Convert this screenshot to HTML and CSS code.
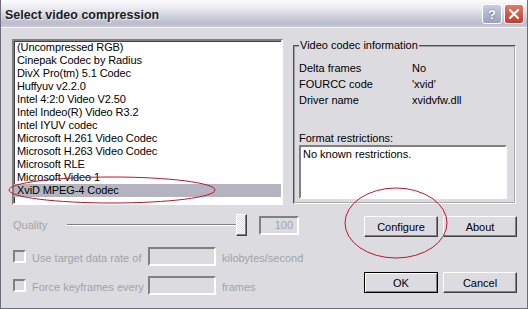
FILE: index.html
```html
<!DOCTYPE html>
<html lang="en">
<head>
    <meta charset="UTF-8">
    <title>Select video compression</title>
    <link rel="stylesheet" href="styles.css">
</head>
<body>
    <div class="window">
        <div class="titlebar">
            <span class="title">Select video compression</span>
            <div class="caption-buttons">
                <span class="cap-btn cap-help">?</span>
                <span class="cap-btn cap-close">
                    <svg width="12" height="12" viewBox="0 0 12 12"><path d="M2 2 L10 10 M10 2 L2 10" stroke="#fff" stroke-width="2.2" stroke-linecap="round"/></svg>
                </span>
            </div>
        </div>

        <div class="client">
            <div class="top">
                <ul class="codec-list">
                    <li>(Uncompressed RGB)</li>
                    <li>Cinepak Codec by Radius</li>
                    <li>DivX Pro(tm) 5.1 Codec</li>
                    <li>Huffyuv v2.2.0</li>
                    <li>Intel 4:2:0 Video V2.50</li>
                    <li>Intel Indeo(R) Video R3.2</li>
                    <li>Intel IYUV codec</li>
                    <li>Microsoft H.261 Video Codec</li>
                    <li>Microsoft H.263 Video Codec</li>
                    <li>Microsoft RLE</li>
                    <li>Microsoft Video 1</li>
                    <li class="selected">XviD MPEG-4 Codec</li>
                </ul>

                <fieldset class="info">
                    <legend>Video codec information</legend>
                    <div class="info-rows">
                        <span>Delta frames</span><span>No</span>
                        <span>FOURCC code</span><span>'xvid'</span>
                        <span>Driver name</span><span>xvidvfw.dll</span>
                    </div>
                    <div class="restrict-label">Format restrictions:</div>
                    <div class="restrict-box">No known restrictions.</div>
                </fieldset>
            </div>

            <div class="bottom">
                <div class="options">
                    <div class="quality-row">
                        <span class="quality-label">Quality</span>
                        <div class="slider">
                            <div class="slider-track"></div>
                            <div class="slider-thumb"></div>
                        </div>
                        <div class="edit edit-small">100</div>
                    </div>
                    <div class="check-row">
                        <span class="checkbox"></span>
                        <span class="check-label">Use target data rate of</span>
                        <div class="edit"></div>
                        <span class="unit">kilobytes/second</span>
                    </div>
                    <div class="check-row">
                        <span class="checkbox"></span>
                        <span class="check-label">Force keyframes every</span>
                        <div class="edit"></div>
                        <span class="unit">frames</span>
                    </div>
                </div>

                <div class="actions">
                    <div class="btn-row">
                        <button class="btn">Configure</button>
                        <button class="btn">About</button>
                    </div>
                    <div class="btn-row btn-row-last">
                        <button class="btn btn-default">OK</button>
                        <button class="btn">Cancel</button>
                    </div>
                </div>
            </div>
        </div>

        <!-- red marker circles drawn over the dialog -->
        <svg class="marks" width="528" height="309" viewBox="0 0 528 309">
            <ellipse cx="112" cy="190" rx="103" ry="13" fill="none" stroke="#c4142c" stroke-width="1"/>
            <ellipse cx="396" cy="223" rx="51" ry="35" fill="none" stroke="#c4142c" stroke-width="1"/>
        </svg>
    </div>
</body>
</html>
```

FILE: styles.css
```css
body {
    margin: 0;
    padding: 0;
    background: #fff;
    font-family: 'Liberation Sans', Arial, sans-serif;
    font-size: 11px;
    color: #000;
}

.window {
    position: relative;
    width: 528px;
    height: 309px;
    box-sizing: border-box;
    background: #dcdbe0;
    border: 1px solid #6c6c7a;
    border-top: none;
    overflow: hidden;
}

.titlebar {
    height: 28px;
    display: flex;
    align-items: center;
    justify-content: space-between;
    padding: 0 3px 0 4px;
    box-sizing: border-box;
    background: linear-gradient(#fbfbfd 0%, #eeeef3 25%, #d6d6e0 55%, #bcbdcb 85%, #c9c9d4 100%);
    border-bottom: 1px solid #f4f4f8;
}

.title {
    font-weight: bold;
    font-size: 12.5px;
    color: #1c1c24;
    text-shadow: 1px 1px 0 rgba(255, 255, 255, 0.7);
    padding-top: 2px;
}

.caption-buttons {
    display: flex;
    gap: 2px;
    padding-top: 1px;
}

.cap-btn {
    width: 20px;
    height: 20px;
    box-sizing: border-box;
    border: 1px solid #fff;
    border-radius: 3px;
    display: flex;
    align-items: center;
    justify-content: center;
}

.cap-help {
    background: linear-gradient(#c9cde0, #9ba1bd);
    color: #fff;
    font-weight: bold;
    font-size: 13px;
    text-shadow: 0 0 2px #4a5070;
}

.cap-close {
    background: linear-gradient(#e27a66, #c33c2c);
}

.client {
    padding: 11px 10px 0 11px;
}

.top {
    display: flex;
    align-items: flex-start;
    gap: 10px;
}

.codec-list {
    list-style: none;
    margin: 0;
    padding: 0;
    width: 271px;
    height: 166px;
    box-sizing: border-box;
    background: #fff;
    border: 2px solid;
    border-color: #808080 #fff #fff #808080;
    box-shadow: inset 1px 1px 0 #404040;
    letter-spacing: -0.1px;
}

.codec-list li {
    height: 13px;
    line-height: 13px;
    padding-left: 3px;
    white-space: nowrap;
}

.codec-list .selected {
    background: #b3b4bf;
}

.info {
    margin: 0;
    width: 223px;
    height: 165px;
    box-sizing: border-box;
    padding: 0 4px 0 4px;
    border: 2px groove #fff;
    border-color: #a0a0a8 #fff #fff #a0a0a8;
    min-inline-size: 0;
}

.info legend {
    padding: 0 1px;
    line-height: 13px;
}

.info-rows {
    display: grid;
    grid-template-columns: 113px 1fr;
    line-height: 16px;
    margin-top: 8px;
}

.restrict-label {
    margin-top: 24px;
    line-height: 13px;
}

.restrict-box {
    width: 208px;
    height: 54px;
    box-sizing: border-box;
    background: #fff;
    border: 2px solid;
    border-color: #808080 #fff #fff #808080;
    padding: 1px 2px;
    line-height: 13px;
}

.bottom {
    display: grid;
    grid-template-columns: 1fr 153px;
}

.options {
    display: flex;
    flex-direction: column;
    padding-left: 1px;
    color: #a3a3a6;
}

.quality-row {
    display: flex;
    align-items: center;
    height: 22px;
    margin-top: 9px;
}

.quality-label {
    width: 54px;
}

.slider {
    position: relative;
    width: 180px;
    height: 22px;
    display: flex;
    align-items: center;
    margin-right: 12px;
}

.slider-track {
    width: 100%;
    height: 2px;
    border-top: 1px solid #808080;
    border-bottom: 1px solid #fff;
    box-sizing: border-box;
}

.slider-thumb {
    position: absolute;
    right: 0;
    top: 0;
    width: 11px;
    height: 22px;
    box-sizing: border-box;
    border: 1px solid;
    border-color: #fff #404040 #404040 #fff;
    box-shadow: inset -1px -1px 0 #808080;
    background: repeating-conic-gradient(#fff 0 25%, #dcdbe0 0 50%) 0 0 / 2px 2px;
}

.edit {
    width: 68px;
    height: 19px;
    box-sizing: border-box;
    border: 2px solid;
    border-color: #808080 #fff #fff #808080;
    text-align: right;
    line-height: 15px;
    padding-right: 4px;
}

.edit-small {
    width: 40px;
}

.check-row {
    display: flex;
    align-items: center;
    height: 19px;
    margin-top: 11px;
}

.check-row + .check-row {
    margin-top: 10px;
}

.checkbox {
    width: 13px;
    height: 13px;
    box-sizing: border-box;
    border: 2px solid;
    border-color: #808080 #fff #fff #808080;
    margin-right: 6px;
}

.check-label {
    width: 116px;
    padding-top: 3px;
}

.unit {
    margin-left: 6px;
    padding-top: 3px;
}

.actions {
    padding-top: 11px;
}

.btn-row {
    display: flex;
    gap: 5px;
}

.btn-row-last {
    margin-top: 35px;
}

.btn {
    width: 74px;
    height: 21px;
    box-sizing: border-box;
    margin: 0;
    padding: 0;
    font-family: inherit;
    font-size: 11px;
    color: #000;
    background: #dcdbe0;
    border: 1px solid;
    border-color: #fff #404040 #404040 #fff;
    box-shadow: inset -1px -1px 0 #808080;
}

.btn-default {
    border-color: #000;
    box-shadow: inset 1px 1px 0 #fff, inset -1px -1px 0 #808080;
}

.marks {
    position: absolute;
    left: -1px;
    top: 0;
    pointer-events: none;
}
```
